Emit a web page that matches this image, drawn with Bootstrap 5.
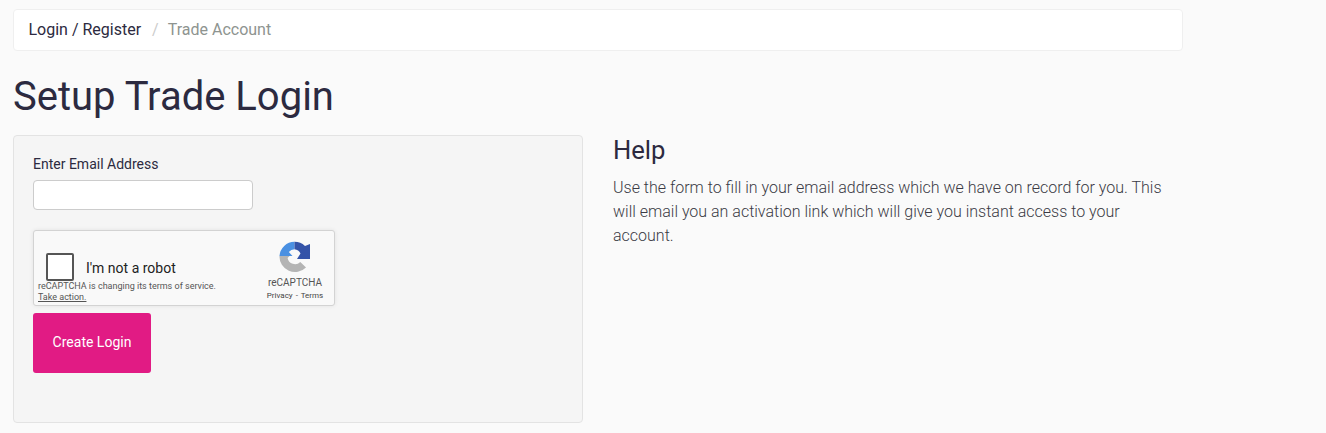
<!DOCTYPE html>
<html lang="en">
<head>
    <meta charset="UTF-8">
    <meta name="viewport" content="width=device-width, initial-scale=1.0">
    <title>Setup Trade Login</title>
    <link href="https://cdn.jsdelivr.net/npm/bootstrap@5.3.0/dist/css/bootstrap.min.css" rel="stylesheet">
    <style>
        body {
            background-color: #fafafa;
            color: #2c2a40;
            font-family: Roboto, "Liberation Sans", sans-serif;
            font-size: 14px;
        }
        .page-wrap {
            width: 1196px;
            padding: 9px 13px 10px;
        }
        .crumbs {
            --bs-breadcrumb-divider-color: #ccc;
            --bs-breadcrumb-item-active-color: #8e9490;
            --bs-breadcrumb-item-padding-x: 11px;
            height: 42px;
            margin-bottom: 0;
            padding: 0 14.5px;
            align-items: center;
            background: #fff;
            border: 1px solid #efefef;
            border-radius: 4px;
            font-size: 16px;
        }
        .crumbs .breadcrumb-item + .breadcrumb-item::before {
            padding-right: 9px;
        }
        .crumbs a {
            color: #2c2a40;
            text-decoration: none;
        }
        .page-title {
            margin: 22px 0 15px;
            font-size: 40px;
            font-weight: 400;
            line-height: 47px;
        }
        .form-row {
            --bs-gutter-x: 30px;
        }
        .login-well {
            height: 288px;
            padding: 18px 19px;
            background: #f5f5f5;
            border: 1px solid #e3e3e3;
            border-radius: 4px;
        }
        .email-label {
            margin-bottom: 7px;
            line-height: 17px;
        }
        .email-input {
            display: block;
            width: 220px;
            height: 30px;
            margin-bottom: 20px;
            border-color: #ccc;
            border-radius: 4px;
        }
        .captcha-box {
            width: 302px;
            height: 76px;
            padding: 22px 0 0 4px;
            background: #f9f9f9;
            border: 1px solid #d3d3d3;
            border-radius: 3px;
            box-shadow: 0 0 4px rgba(0, 0, 0, .08);
        }
        .captcha-check {
            width: 28px;
            height: 28px;
            margin-left: 8px;
            background: #fff;
            border: 2px solid #555;
            border-radius: 2px;
        }
        .captcha-text {
            margin-left: 12px;
            padding-top: 2px;
            color: #222;
            font-size: 14px;
        }
        .captcha-note {
            color: #555;
            font-size: 9px;
            line-height: 11px;
        }
        .captcha-note u {
            display: block;
        }
        .captcha-brand {
            flex: 0 0 78px;
            margin-top: -12px;
            color: #555;
            text-align: center;
        }
        .captcha-brand svg {
            display: block;
            margin: 0 auto 3px;
        }
        .captcha-name {
            font-size: 10px;
            line-height: 13px;
        }
        .captcha-links {
            margin-top: 2px;
            color: #444;
            font-size: 8px;
            line-height: 10px;
            word-spacing: 1px;
        }
        .create-btn {
            display: block;
            width: 118px;
            height: 60px;
            margin-top: 7px;
            padding: 0 0 2px;
            background: #e11b84;
            border: 0;
            border-radius: 3px;
            color: #fff;
            font-size: 14px;
        }
        .help-title {
            margin: 0 0 12px;
            padding-top: 2px;
            color: #2c2a40;
            font-size: 25.6px;
            font-weight: 400;
            line-height: 27px;
        }
        .help-text {
            margin: 0;
            color: #3a3a45;
            font-size: 16px;
            font-weight: 300;
            line-height: 24px;
        }
    </style>
</head>
<body>
    <div class="page-wrap">
        <nav aria-label="breadcrumb">
            <ol class="breadcrumb crumbs">
                <li class="breadcrumb-item"><a href="#">Login / Register</a></li>
                <li class="breadcrumb-item active" aria-current="page">Trade Account</li>
            </ol>
        </nav>

        <h1 class="page-title">Setup Trade Login</h1>

        <div class="row form-row">
            <div class="col-6">
                <form class="login-well">
                    <label class="form-label email-label" for="email">Enter Email Address</label>
                    <input class="form-control email-input" id="email" type="email">

                    <div class="captcha-box d-flex">
                        <div class="flex-grow-1">
                            <div class="d-flex align-items-center">
                                <div class="captcha-check"></div>
                                <span class="captcha-text">I'm not a robot</span>
                            </div>
                            <div class="captcha-note">
                                reCAPTCHA is changing its terms of service.
                                <u>Take action.</u>
                            </div>
                        </div>
                        <div class="captcha-brand">
                            <svg width="32" height="32" viewBox="0 0 32 32" aria-hidden="true">
                                <path fill="#b4b4b4" d="M.5 15H10.5L8.6 17A7.5 7.5 0 0 0 21.3 21L27 26.5A15.5 15.5 0 0 1 .5 15Z"/>
                                <path fill="#4a90e2" d="M15.5 .8A15.2 15.2 0 0 0 .5 15H13.5L9.8 11A7.5 7.5 0 0 1 15.5 8.3Z"/>
                                <path fill="#3453a8" d="M15.5 .8A15.2 15.2 0 0 1 26 5L31 3V18H18L21.5 12.5A7.5 7.5 0 0 0 15.5 8.3Z"/>
                            </svg>
                            <div class="captcha-name">reCAPTCHA</div>
                            <div class="captcha-links">Privacy - Terms</div>
                        </div>
                    </div>

                    <button class="btn create-btn" type="button">Create Login</button>
                </form>
            </div>
            <div class="col-6">
                <h3 class="help-title">Help</h3>
                <p class="help-text">Use the form to fill in your email address which we have on record for you. This will email you an activation link which will give you instant access to your account.</p>
            </div>
        </div>
    </div>

    <script src="https://cdn.jsdelivr.net/npm/bootstrap@5.3.0/dist/js/bootstrap.bundle.min.js"></script>
</body>
</html>
